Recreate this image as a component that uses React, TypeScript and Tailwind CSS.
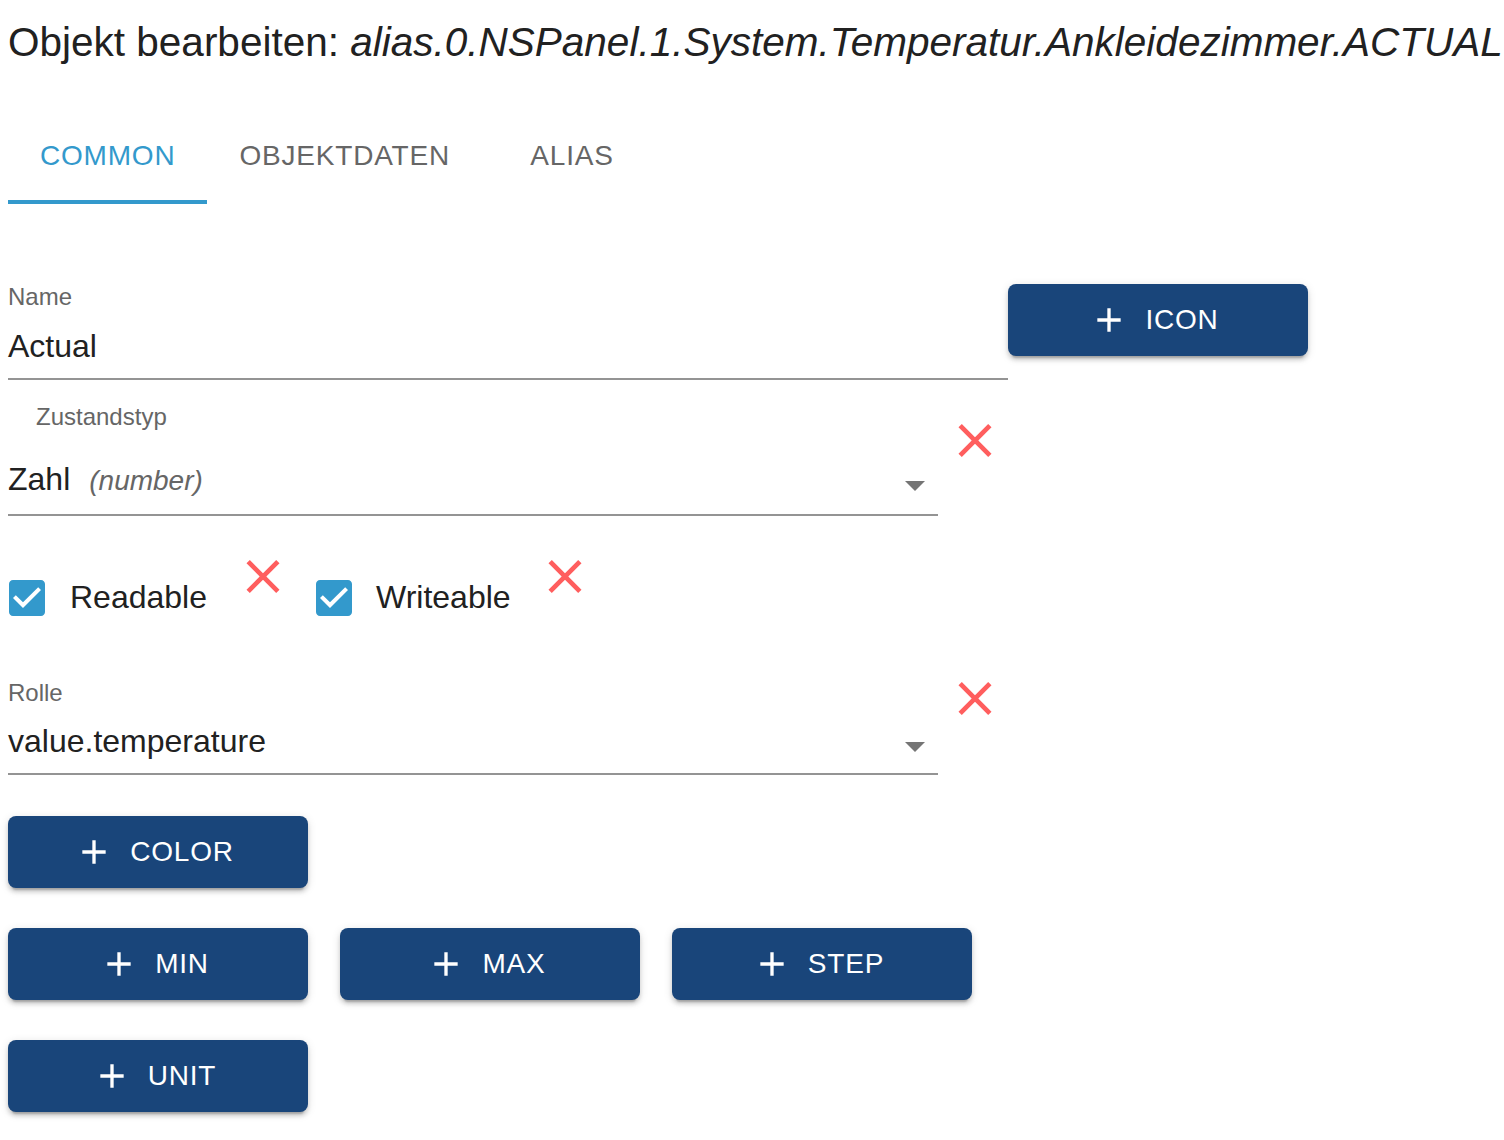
import React from "react";

const BLUE = "#3399cc";

function RedX({ className = "" }: { className?: string }) {
  return (
    <svg viewBox="5 5 14 14" width={34} height={33} className={className}>
      <path
        fill="#ff5e5e"
        d="M19 6.41 17.59 5 12 10.59 6.41 5 5 6.41 10.59 12 5 17.59 6.41 19 12 13.41 17.59 19 19 17.59 13.41 12z"
      />
    </svg>
  );
}

function Arrow() {
  return (
    <svg viewBox="0 0 24 24" width={48} height={48} className="shrink-0">
      <path fill="#757575" d="M7 10l5 5 5-5z" />
    </svg>
  );
}

function Check() {
  return (
    <svg viewBox="3 3 18 18" width={36} height={36} className="shrink-0">
      <path
        fill={BLUE}
        d="M19 3H5c-1.11 0-2 .9-2 2v14c0 1.1.89 2 2 2h14c1.11 0 2-.9 2-2V5c0-1.1-.89-2-2-2zm-9 14l-5-5 1.41-1.41L10 14.17l7.59-7.59L19 8l-9 9z"
      />
    </svg>
  );
}

function Plus() {
  return (
    <svg viewBox="0 0 24 24" width={40} height={40} className="shrink-0 -ml-[8px] mr-[16px]">
      <path fill="#ffffff" d="M19 13h-6v6h-2v-6H5v-2h6V5h2v6h6v2z" />
    </svg>
  );
}

function Btn({ label, className = "" }: { label: string; className?: string }) {
  return (
    <button
      className={
        "flex h-[72px] w-[300px] shrink-0 items-center justify-center rounded-[8px] bg-[#19457a] text-[28px] leading-[28px] tracking-[0.8px] text-white shadow-[0_6px_2px_-4px_rgba(0,0,0,0.2),0_4px_4px_0_rgba(0,0,0,0.14),0_2px_10px_0_rgba(0,0,0,0.12)] " +
        className
      }
    >
      <Plus />
      <span>{label}</span>
    </button>
  );
}

export default function App() {
  return (
    <div
      className="h-[1140px] w-[1504px] overflow-hidden bg-white text-[#212121]"
      style={{ fontFamily: '"Liberation Sans", Arial, sans-serif' }}
    >
      {/* Title */}
      <div className="mt-[22px] h-[40px] whitespace-nowrap pl-[8px] text-[40.5px] leading-[40px] text-[#212121]">
        Objekt bearbeiten: <span className="italic">alias.0.NSPanel.1.System.Temperatur.Ankleidezimmer.ACTUAL</span>
      </div>

      {/* Tabs */}
      <div className="mt-[46px] flex h-[96px] pl-[8px]">
        <div className="flex h-[96px] min-w-[180px] items-center justify-center border-b-4 border-[#3399cc] px-[32px] pt-[4px] text-[28px] leading-[28px] tracking-[0.8px] text-[#3399cc]">
          COMMON
        </div>
        <div className="flex h-[96px] min-w-[180px] items-center justify-center px-[32px] text-[28px] leading-[28px] tracking-[0.8px] text-[#666666]">
          OBJEKTDATEN
        </div>
        <div className="flex h-[96px] min-w-[180px] items-center justify-center px-[32px] text-[28px] leading-[28px] tracking-[0.8px] text-[#666666]">
          ALIAS
        </div>
      </div>

      {/* Name row */}
      <div className="mt-[80px] flex items-start pl-[8px]">
        <div className="w-[1000px]">
          <div className="mt-[1px] h-[24px] text-[24px] leading-[24px] text-[#666666]">Name</div>
          <div className="mt-[21px] h-[32px] text-[32px] leading-[32px]">Actual</div>
          <div className="mt-[16px] h-[2px] bg-[#949494]" />
        </div>
        <Btn label="ICON" />
      </div>

      {/* Zustandstyp */}
      <div className="mt-[25px] flex items-start pl-[8px]">
        <div className="w-[930px]">
          <div className="h-[24px] pl-[28px] text-[24px] leading-[24px] text-[#666666]">Zustandstyp</div>
          <div className="mt-[35px] flex h-[32px] items-center justify-between">
            <div className="flex items-baseline whitespace-nowrap">
              <span className="text-[32px] leading-[32px]">Zahl</span>
              <span className="ml-[19px] text-[28px] italic leading-[32px] text-[#666666]">(number)</span>
            </div>
            <div className="-mr-[1px] mt-[10px]">
              <Arrow />
            </div>
          </div>
          <div className="mt-[18px] h-[2px] bg-[#949494]" />
        </div>
        <RedX className="ml-[20px] mt-[19px]" />
      </div>

      {/* Checkboxes */}
      <div className="mt-[44px] flex items-start pl-[9px]">
        <div className="mt-[20px]">
          <Check />
        </div>
        <div className="ml-[25px] mt-[21px] text-[32px] leading-[32px]">Readable</div>
        <RedX className="ml-[39px]" />
        <div className="ml-[36px] mt-[20px]">
          <Check />
        </div>
        <div className="ml-[24px] mt-[21px] text-[32px] leading-[32px]">Writeable</div>
        <RedX className="ml-[37px]" />
      </div>

      {/* Rolle */}
      <div className="mt-[65px] flex items-start pl-[8px]">
        <div className="w-[930px]">
          <div className="h-[24px] text-[24px] leading-[24px] text-[#666666]">Rolle</div>
          <div className="mt-[20px] flex h-[32px] items-center justify-between">
            <span className="text-[32px] leading-[32px]">value.temperature</span>
            <div className="-mr-[1px] mt-[10px]">
              <Arrow />
            </div>
          </div>
          <div className="mt-[16px] h-[2px] bg-[#949494]" />
        </div>
        <RedX className="ml-[20px] mt-[1px]" />
      </div>

      {/* Buttons */}
      <div className="mt-[41px] flex flex-col gap-[40px] pl-[8px]">
        <div className="flex">
          <Btn label="COLOR" />
        </div>
        <div className="flex gap-[32px]">
          <Btn label="MIN" />
          <Btn label="MAX" />
          <Btn label="STEP" />
        </div>
        <div className="flex">
          <Btn label="UNIT" />
        </div>
      </div>
    </div>
  );
}
